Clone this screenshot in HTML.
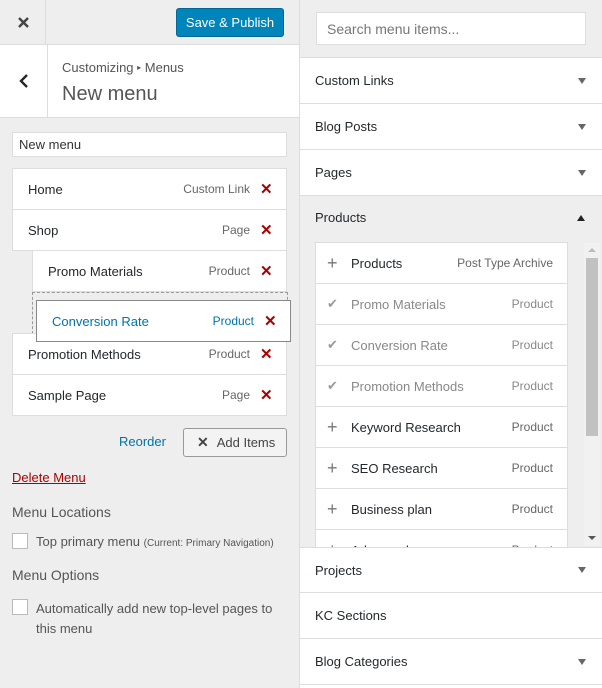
<!DOCTYPE html>
<html><head><style>
*{box-sizing:border-box;margin:0;padding:0}
body{width:602px;height:688px;overflow:hidden;background:#eee;font-family:"Liberation Sans",sans-serif;font-size:13px;color:#23282d;position:relative}
.a{position:absolute}
.left{left:0;top:0;width:299px;height:688px;background:#eee}
.row{position:absolute;background:#fff;border:1px solid #ddd;height:42px;display:flex;align-items:center;padding:0 0 0 15px;font-size:13px}
.row .t{margin-left:auto;color:#666;font-size:12px;margin-right:10px}
.x{color:#a00;font-size:15px;font-weight:bold;width:16px;margin-right:10px}
.right{left:299px;top:0;width:303px;height:688px;border-left:1px solid #ddd;background:#fff}
.hd{position:absolute;left:0;width:303px;height:46px;border-bottom:1px solid #ddd;background:#fff;display:flex;align-items:center;padding-left:15px;font-size:13px}
.tri{position:absolute;right:17px;width:0;height:0;border-left:4px solid transparent;border-right:4px solid transparent;border-top:6px solid #666}
.it{position:absolute;left:15px;width:253px;height:41px;background:#fff;border-bottom:1px solid #ddd;display:flex;align-items:center;padding-left:36px}
.it .t{margin-left:auto;color:#666;font-size:12px;margin-right:15px}
.it .ic{position:absolute;left:12px;color:#777;font-size:18px}
.it.g{color:#888}
.cb{position:absolute;width:16px;height:16px;border:1px solid #bbb;background:#fff}
</style></head><body>
<div class="a left">
 <div class="a" style="left:0;top:0;width:299px;height:45px;border-bottom:1px solid #ddd"></div>
 <div class="a" style="left:45px;top:0;width:1px;height:45px;background:#ddd"></div>
 <svg class="a" style="left:17px;top:16px" width="13" height="13"><path d="M2 2 L11 11 M11 2 L2 11" stroke="#444" stroke-width="2.4"/></svg>
 <div class="a" style="left:176px;top:8px;width:108px;height:29px;background:#0085ba;border:1px solid #006799;border-radius:3px;color:#fff;font-size:13px;display:flex;align-items:center;justify-content:center">Save &amp; Publish</div>
 <div class="a" style="left:0;top:45px;width:299px;height:73px;background:#fff;border-bottom:1px solid #ddd"></div>
 <div class="a" style="left:47px;top:45px;width:1px;height:73px;background:#ddd"></div>
 <svg class="a" style="left:18px;top:73px" width="12" height="16"><path d="M9 2 L3 8 L9 14" stroke="#23282d" stroke-width="2.4" fill="none"/></svg>
 <div class="a" style="left:62px;top:60px;font-size:13px;color:#555">Customizing <span style="font-size:8px;vertical-align:2px">▸</span> Menus</div>
 <div class="a" style="left:62px;top:83px;font-size:20px;color:#555;font-weight:300">New menu</div>
 <div class="a" style="left:12px;top:132px;width:275px;height:25px;background:#fff;border:1px solid #ddd;padding:4px 6px;font-size:13px;color:#333">New menu</div>
 <div class="row" style="left:12px;top:168px;width:275px">Home<span class="t">Custom Link</span><span class="x">✕</span></div>
 <div class="row" style="left:12px;top:209px;width:275px">Shop<span class="t">Page</span><span class="x">✕</span></div>
 <div class="row" style="left:32px;top:250px;width:255px">Promo Materials<span class="t">Product</span><span class="x">✕</span></div>
 <div class="a" style="left:32px;top:292px;width:256px;height:42px;border:1px dashed #999"></div>
 <div class="row" style="left:12px;top:333px;width:275px">Promotion Methods<span class="t">Product</span><span class="x">✕</span></div>
 <div class="row" style="left:12px;top:374px;width:275px">Sample Page<span class="t">Page</span><span class="x">✕</span></div>
 <div class="row" style="left:36px;top:300px;width:255px;border-color:#888;color:#0073aa">Conversion Rate<span class="t" style="color:#0073aa">Product</span><span class="x">✕</span></div>
 <div class="a" style="left:119px;top:434px;color:#0073aa">Reorder</div>
 <div class="a" style="left:183px;top:428px;width:104px;height:29px;border:1px solid #999;border-radius:3px;background:#f3f3f3;display:flex;align-items:center;padding-left:13px;color:#444"><b style="font-size:14px;margin-right:8px">✕</b>Add Items</div>
 <div class="a" style="left:12px;top:470px;color:#a00;text-decoration:underline">Delete Menu</div>
 <div class="a" style="left:12px;top:504px;font-size:14px;color:#555">Menu Locations</div>
 <div class="cb" style="left:12px;top:533px"></div>
 <div class="a" style="left:36px;top:534px;color:#555">Top primary menu <span style="font-size:10px">(Current: Primary Navigation)</span></div>
 <div class="a" style="left:12px;top:567px;font-size:14px;color:#555">Menu Options</div>
 <div class="cb" style="left:12px;top:599px"></div>
 <div class="a" style="left:36px;top:599px;width:255px;color:#555;line-height:20px">Automatically add new top-level pages to this menu</div>
</div>
<div class="a right">
 <div class="a" style="left:0;top:0;width:303px;height:58px;background:#eee;border-bottom:1px solid #ddd"></div>
 <div class="a" style="left:16px;top:12px;width:270px;height:33px;background:#fff;border:1px solid #ddd;padding:8px 10px;color:#777;font-size:14px">Search menu items...</div>
 <div class="hd" style="top:58px">Custom Links<span class="tri"></span></div>
 <div class="hd" style="top:104px">Blog Posts<span class="tri"></span></div>
 <div class="hd" style="top:150px">Pages<span class="tri"></span></div>
 <div class="a" style="left:0;top:196px;width:303px;height:351px;background:#eee"></div>
 <div class="a" style="left:15px;top:210px">Products</div>
 <div class="tri" style="top:215px;border-top:none;border-bottom:6px solid #222"></div>
 <div class="a" style="left:15px;top:242px;width:253px;height:305px;overflow:hidden;border:1px solid #ddd;border-bottom:none">
  <div style="position:relative;left:-16px">
  <div class="it" style="top:0"><span class="ic">+</span>Products<span class="t">Post Type Archive</span></div>
  <div class="it g" style="top:41px"><span class="ic" style="font-size:13px;color:#999">✔</span>Promo Materials<span class="t" style="color:#888">Product</span></div>
  <div class="it g" style="top:82px"><span class="ic" style="font-size:13px;color:#999">✔</span>Conversion Rate<span class="t" style="color:#888">Product</span></div>
  <div class="it g" style="top:123px"><span class="ic" style="font-size:13px;color:#999">✔</span>Promotion Methods<span class="t" style="color:#888">Product</span></div>
  <div class="it" style="top:164px"><span class="ic">+</span>Keyword Research<span class="t">Product</span></div>
  <div class="it" style="top:205px"><span class="ic">+</span>SEO Research<span class="t">Product</span></div>
  <div class="it" style="top:246px"><span class="ic">+</span>Business plan<span class="t">Product</span></div>
  <div class="it" style="top:287px"><span class="ic">+</span>Advanced<span class="t">Product</span></div>
  </div>
 </div>
 <div class="a" style="left:284px;top:243px;width:16px;height:303px;background:#f1f1f1"></div>
 <div class="a" style="left:286px;top:258px;width:12px;height:178px;background:#c1c1c1"></div>
 <div class="a" style="left:288px;top:248px;border-left:4px solid transparent;border-right:4px solid transparent;border-bottom:4px solid #bbb"></div>
 <div class="a" style="left:288px;top:536px;border-left:4px solid transparent;border-right:4px solid transparent;border-top:4px solid #555"></div>
 <div class="hd" style="top:547px;border-top:1px solid #ddd">Projects<span class="tri"></span></div>
 <div class="hd" style="top:593px">KC Sections</div>
 <div class="hd" style="top:639px">Blog Categories<span class="tri"></span></div>
</div>
</body></html>
